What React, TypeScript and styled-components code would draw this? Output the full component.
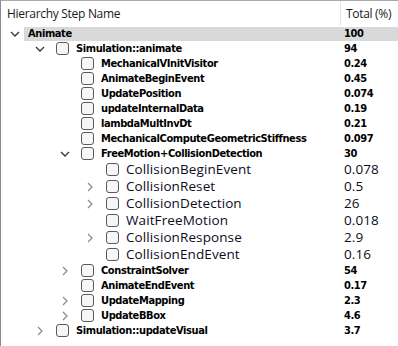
import React from "react";
import styled, { createGlobalStyle } from "styled-components";

type Node = {
  name: string;
  value: string;
  level: number;
  expander?: "open" | "closed";
  bold?: boolean;
  check?: boolean;
  selected?: boolean;
};

const rows: Node[] = [
  { name: "Animate", value: "100", level: 0, expander: "open", bold: true, check: false, selected: true },
  { name: "Simulation::animate", value: "94", level: 1, expander: "open", bold: true },
  { name: "MechanicalVInitVisitor", value: "0.24", level: 2, bold: true },
  { name: "AnimateBeginEvent", value: "0.45", level: 2, bold: true },
  { name: "UpdatePosition", value: "0.074", level: 2, bold: true },
  { name: "updateInternalData", value: "0.19", level: 2, bold: true },
  { name: "lambdaMultInvDt", value: "0.21", level: 2, bold: true },
  { name: "MechanicalComputeGeometricStiffness", value: "0.097", level: 2, bold: true },
  { name: "FreeMotion+CollisionDetection", value: "30", level: 2, expander: "open", bold: true },
  { name: "CollisionBeginEvent", value: "0.078", level: 3 },
  { name: "CollisionReset", value: "0.5", level: 3, expander: "closed" },
  { name: "CollisionDetection", value: "26", level: 3, expander: "closed" },
  { name: "WaitFreeMotion", value: "0.018", level: 3 },
  { name: "CollisionResponse", value: "2.9", level: 3, expander: "closed" },
  { name: "CollisionEndEvent", value: "0.16", level: 3 },
  { name: "ConstraintSolver", value: "54", level: 2, expander: "closed", bold: true },
  { name: "AnimateEndEvent", value: "0.17", level: 2, bold: true },
  { name: "UpdateMapping", value: "2.3", level: 2, expander: "closed", bold: true },
  { name: "UpdateBBox", value: "4.6", level: 2, expander: "closed", bold: true },
  { name: "Simulation::updateVisual", value: "3.7", level: 1, expander: "closed", bold: true },
];

const Global = createGlobalStyle`
  html, body {
    margin: 0;
    padding: 0;
    background: #ffffff;
  }
`;

const Frame = styled.div`
  width: 398px;
  height: 346px;
  box-sizing: border-box;
  border-left: 1px solid #8c8c8c;
  border-top: 1px solid #a9a9a9;
  background: #ffffff;
  overflow: hidden;
  font-family: "Open Sans", "Noto Sans", sans-serif;
  color: #000;
`;

const Header = styled.div`
  display: flex;
  height: 25px;
  align-items: stretch;
  font-size: 12px;
  line-height: 16px;
  letter-spacing: -0.3px;
  color: #1a1a1a;
`;

const HeaderCell = styled.div<{ $w?: number }>`
  display: flex;
  align-items: center;
  box-sizing: border-box;
  padding-left: 6px;
  ${(p) => (p.$w ? `width: ${p.$w}px;` : "flex: 1;")}
  & + & {
    border-left: 1px solid #e3e3e3;
    padding-left: 5px;
  }
`;

const Row = styled.div<{ $bold?: boolean }>`
  display: flex;
  align-items: center;
  height: ${(p) => (p.$bold ? 15 : 17)}px;
  padding-left: 5px;
`;

const Indent = styled.div<{ $level: number }>`
  flex: none;
  width: ${(p) => p.$level * 25}px;
`;

const Expander = styled.div`
  flex: none;
  width: 18px;
  height: 100%;
  display: flex;
  align-items: center;
  justify-content: center;
`;

const Check = styled.div`
  flex: none;
  width: 11px;
  height: 11px;
  margin-left: 7px;
  margin-right: 3px;
  border: 1px solid #5a5a5a;
  border-radius: 3px;
  background: #f6f6f6;
`;

const Body = styled.div<{ $selected?: boolean; $bold?: boolean }>`
  flex: 1;
  display: flex;
  align-items: center;
  height: ${(p) => (p.$bold ? 14 : 17)}px;
  line-height: ${(p) => (p.$bold ? 14 : 17)}px;
  padding-left: 4px;
  min-width: 0;
  background: ${(p) => (p.$selected ? "#d9d9d9" : "transparent")};
  font-family: ${(p) =>
    p.$bold ? `"DejaVu Sans Condensed", "DejaVu Sans", sans-serif` : `"Open Sans", sans-serif`};
  font-weight: ${(p) => (p.$bold ? 700 : 400)};
  font-size: ${(p) => (p.$bold ? "11px" : "13.5px")};
  letter-spacing: ${(p) => (p.$bold ? "-0.4px" : "0.1px")};
  color: ${(p) => (p.$bold ? "#000" : "#0c0c1c")};
`;

const Name = styled.div`
  flex: 1;
  min-width: 0;
  white-space: nowrap;
  overflow: hidden;
`;

const Value = styled.div`
  flex: none;
  width: 54px;
  white-space: nowrap;
`;

const Chevron = ({ dir }: { dir: "open" | "closed" }) =>
  dir === "open" ? (
    <svg width="10" height="6" viewBox="0 0 10 6">
      <path d="M1 1 L5 5 L9 1" fill="none" stroke="#333" strokeWidth="1.3" />
    </svg>
  ) : (
    <svg width="6" height="10" viewBox="0 0 6 10">
      <path d="M1 1 L5 5 L1 9" fill="none" stroke="#8a8a8a" strokeWidth="1.2" />
    </svg>
  );

export default function App() {
  return (
    <Frame>
      <Global />
      <Header>
        <HeaderCell $w={339}>Hierarchy Step Name</HeaderCell>
        <HeaderCell>Total (%)</HeaderCell>
      </Header>
      {rows.map((r, i) => (
        <Row key={i} $bold={r.bold}>
          <Indent $level={r.level} />
          <Expander>{r.expander && <Chevron dir={r.expander} />}</Expander>
          {r.check !== false && <Check />}
          <Body $selected={r.selected} $bold={r.bold}>
            <Name>{r.name}</Name>
            <Value>{r.value}</Value>
          </Body>
        </Row>
      ))}
    </Frame>
  );
}
